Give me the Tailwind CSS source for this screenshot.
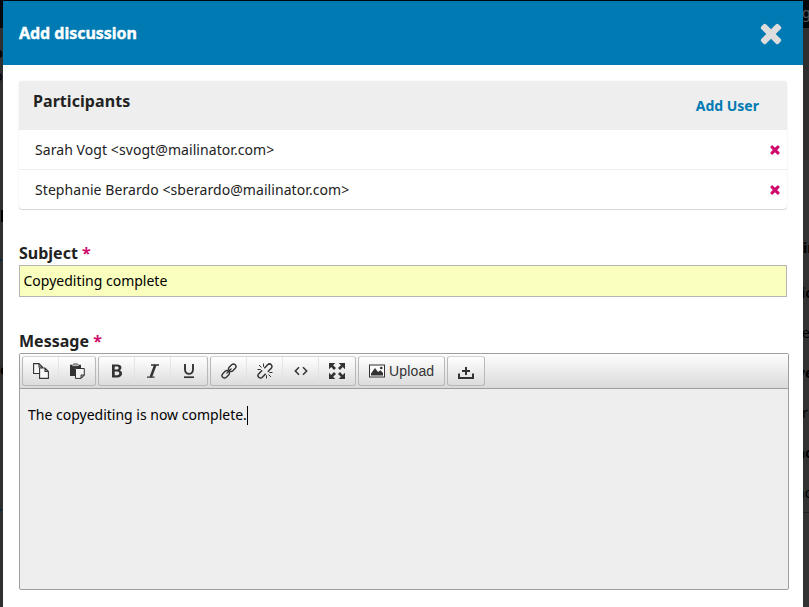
<!DOCTYPE html>
<html lang="en">
<head>
<meta charset="utf-8">
<title>Add discussion</title>
<script src="https://cdn.jsdelivr.net/npm/@tailwindcss/browser@4"></script>
</head>
<body class="relative h-[607px] w-[809px] overflow-hidden bg-[#2f2f2f] font-['Noto_Sans',sans-serif] text-sm text-[#222]">
<!-- dimmed page behind the dialog -->
<div class="absolute inset-0 overflow-hidden text-black" aria-hidden="true">
  <div class="h-7 bg-[#02080c]"></div>
  <div class="absolute right-0 top-[160px] h-[447px] w-1.5 bg-[#323232]"></div>
  <span class="absolute left-[-6px] top-[43px] font-bold">p</span>
  <span class="absolute left-[-6px] top-[66px]">o</span>
  <span class="absolute left-px top-[210px] h-3 w-[2px] bg-black"></span>
  <span class="absolute left-0 top-[259px] h-[2px] w-[2px] bg-[#002b42]"></span>
  <span class="absolute left-0 top-[360px] font-bold">c</span>
  <span class="absolute left-0 top-[509px] h-[2px] w-[2px] bg-[#002b42]"></span>
  <span class="absolute left-[802px] top-[3px] text-sm text-[#555]">g</span>
  <span class="absolute left-[803px] top-[238px] font-bold">in</span>
  <span class="absolute left-[801px] top-[283px] font-bold">ic</span>
  <span class="absolute left-[802px] top-[323px]">e</span>
  <span class="absolute left-[797px] top-[363px] font-bold">ve</span>
  <span class="absolute left-[802px] top-[403px]">r</span>
  <span class="absolute left-[796px] top-[443px] font-bold">nc</span>
  <span class="absolute left-[796px] top-[483px]">no</span>
  <span class="absolute right-0 top-[512px] h-px w-1.5 bg-[#222]"></span>
</div>

<main class="relative ml-[3px] mt-px h-[606px] w-[800px] bg-white">
  <header class="flex h-16 items-center justify-between bg-[#007ab2] pl-4 pr-[21px]">
    <h1 class="text-base font-bold leading-6 tracking-[-0.03px] text-white [-webkit-text-stroke:0.4px_white]">Add discussion</h1>
    <svg class="mt-0.5 h-[22px] w-[22px]" viewBox="0 0 22 22"><path d="M11 6.3 16 1.3Q17.3 .2 18.5 1.3L20.7 3.5Q21.8 4.7 20.7 6L15.7 11 20.7 16Q21.8 17.3 20.7 18.5L18.5 20.7Q17.3 21.8 16 20.7L11 15.7 6 20.7Q4.7 21.8 3.5 20.7L1.3 18.5Q.2 17.3 1.3 16L6.3 11 1.3 6Q.2 4.7 1.3 3.5L3.5 1.3Q4.7 .2 6 1.3Z" fill="#ddd"/></svg>
  </header>

  <div class="pl-4 pt-4">
    <section class="h-32 w-[768px] rounded-[3px] shadow-[0_0_1px_rgba(0,0,0,.2),0_1px_1px_rgba(0,0,0,.15)]">
      <div class="flex h-[49px] justify-between rounded-t-[3px] bg-[#eee] pl-3.5 pr-7">
        <h2 class="pt-2 text-base font-bold leading-6 tracking-[0.06px]">Participants</h2>
        <a class="pt-[15px] text-sm font-bold leading-5 text-[#007ab2]">Add User</a>
      </div>
      <div class="flex h-10 items-center justify-between border-b border-[#eee] pl-4 pr-[7px]">
        <span class="whitespace-nowrap tracking-[0.07px]">Sarah Vogt &lt;svogt@mailinator.com&gt;</span>
        <svg class="mt-px h-2.5 w-2.5" viewBox="0 0 22 22"><path d="M11 6.3 16 1.3Q17.3 .2 18.5 1.3L20.7 3.5Q21.8 4.7 20.7 6L15.7 11 20.7 16Q21.8 17.3 20.7 18.5L18.5 20.7Q17.3 21.8 16 20.7L11 15.7 6 20.7Q4.7 21.8 3.5 20.7L1.3 18.5Q.2 17.3 1.3 16L6.3 11 1.3 6Q.2 4.7 1.3 3.5L3.5 1.3Q4.7 .2 6 1.3Z" fill="#d00a6c"/></svg>
      </div>
      <div class="flex h-[39px] items-center justify-between pl-4 pr-[7px]">
        <span class="whitespace-nowrap tracking-[0.07px]">Stephanie Berardo &lt;sberardo@mailinator.com&gt;</span>
        <svg class="mt-px h-2.5 w-2.5" viewBox="0 0 22 22"><path d="M11 6.3 16 1.3Q17.3 .2 18.5 1.3L20.7 3.5Q21.8 4.7 20.7 6L15.7 11 20.7 16Q21.8 17.3 20.7 18.5L18.5 20.7Q17.3 21.8 16 20.7L11 15.7 6 20.7Q4.7 21.8 3.5 20.7L1.3 18.5Q.2 17.3 1.3 16L6.3 11 1.3 6Q.2 4.7 1.3 3.5L3.5 1.3Q4.7 .2 6 1.3Z" fill="#d00a6c"/></svg>
      </div>
    </section>

    <div class="mt-8 h-6 text-base font-bold leading-6">Subject <span class="text-[#d00a6c]">*</span></div>
    <div class="flex h-8 w-[768px] items-center border border-[#b5b5b5] bg-[#faffbd] pl-[3.5px] text-black">Copyediting complete</div>

    <div class="mt-8 h-6 text-base font-bold leading-6">Message <span class="text-[#d00a6c]">*</span></div>
    <div class="h-[237px] w-[770px] rounded-[2px] border border-[#9e9e9e] bg-[#eee]">
      <div class="flex h-[35px] gap-0.5 border-b border-[#9e9e9e] bg-linear-to-b from-[#fdfdfd] to-[#dadada] pl-0.5 pt-0.5 text-[#333]">
        <div class="flex h-[30px] w-[74px] rounded-[3px] border border-[#b8b8b8] border-t-[#d4d4d4] bg-linear-to-b from-white to-[#dcdcdc]">
          <div class="flex w-9 items-center justify-center border-r border-[#e4e4e4]">
            <svg class="h-4 w-4" viewBox="0 0 16 16" fill="#f8f8f8" stroke="#333" stroke-width="1.1"><path d="M.6.6H6L9.4 4V10.5H.6ZM6 .6V4H9.4"/><path d="M6.6 5H12L15.4 8.4V15.4H6.6ZM12 5V8.4H15.4"/></svg>
          </div>
          <div class="flex w-9 items-center justify-center">
            <svg class="h-4 w-4" viewBox="0 0 16 16"><path d="M1 1.8H4.5V.5H8.5V1.8H12V5H6V13H1Z" fill="#333"/><path d="M3.3 2.6H9.7M5.3 1.3H7.7" stroke="#eee" stroke-width=".8"/><path d="M6.5 5.5H15.3V12L12 15.4H6.5Z" fill="#f3f3f3" stroke="#333"/><path d="M12 15.4V12H15.3Z" fill="#bbb" stroke="#333"/></svg>
          </div>
        </div>
        <div class="flex h-[30px] w-[110px] rounded-[3px] border border-[#b8b8b8] border-t-[#d4d4d4] bg-linear-to-b from-white to-[#dcdcdc]">
          <div class="flex w-9 items-center justify-center border-r border-[#e4e4e4]">
            <svg class="h-4 w-4" viewBox="0 0 16 16"><path fill-rule="evenodd" d="M3 1.5H8.2C13.3 1.5 13.5 6.2 10.6 7.2 14.7 8.4 13.5 14.5 8.5 14.5H3ZM5.7 3.6V6.5H8C10.3 6.5 10.2 3.6 8 3.6ZM5.7 8.6V12.3H8.2C11 12.3 11 8.6 8.2 8.6Z" fill="#333"/></svg>
          </div>
          <div class="flex w-9 items-center justify-center border-r border-[#e4e4e4]">
            <svg class="h-4 w-4" viewBox="0 0 16 16" fill="none" stroke="#333"><path d="M6 2H14M2 14.2H9.5" stroke-width="1.3"/><path d="M10.3 2 5.8 14" stroke-width="2.5"/></svg>
          </div>
          <div class="flex w-9 items-center justify-center">
            <svg class="h-4 w-4" viewBox="0 0 16 16" fill="none" stroke="#333"><path d="M4 1V6.5C4 12.3 12 12.3 12 6.5V1" stroke-width="1.9"/><path d="M3 14.2H13" stroke-width="1.7"/></svg>
          </div>
        </div>
        <div class="flex h-[30px] w-[146px] rounded-[3px] border border-[#b8b8b8] border-t-[#d4d4d4] bg-linear-to-b from-white to-[#dcdcdc]">
          <div class="flex w-9 items-center justify-center border-r border-[#e4e4e4]">
            <svg class="h-4 w-4" viewBox="0 0 16 16" fill="none" stroke="#333" stroke-width="1.4" stroke-linecap="round"><g transform="rotate(-45 8 8)"><rect x="-.8" y="5.5" width="8.3" height="5" rx="2.5"/><rect x="8.5" y="5.5" width="8.3" height="5" rx="2.5"/><path d="M5 8H11"/></g></svg>
          </div>
          <div class="flex w-9 items-center justify-center border-r border-[#e4e4e4]">
            <svg class="h-4 w-4" viewBox="0 0 16 16" fill="none" stroke="#333" stroke-width="1.5"><g transform="rotate(-45 8 8)"><path d="M6.5 5.5H1.7A2.5 2.5 0 0 0 1.7 10.5H6.5M9.5 5.5H14.3A2.5 2.5 0 0 1 14.3 10.5H9.5"/></g><path d="M6.5 3.8V.5M4.5 4.5 2 2M3.7 6.5H.5M9.5 12.2V15.5M11.5 11.5 14 14M12.3 9.5H15.5" stroke-width="1"/></svg>
          </div>
          <div class="flex w-9 items-center justify-center border-r border-[#e4e4e4]">
            <svg class="h-4 w-4" viewBox="0 0 16 16" fill="none" stroke="#333" stroke-width="1.5"><path d="M6 4.2 2.3 8 6 11.8M10 4.2 13.7 8 10 11.8"/></svg>
          </div>
          <div class="flex w-9 items-center justify-center">
            <svg class="h-4 w-4" viewBox="0 0 16 16"><path d="M0 0H6.3L4.1 2.2 7 5 5 7 2.2 4.1 0 6.3ZM16 0V6.3L13.8 4.1 11 7 9 5 11.9 2.2 9.7 0ZM0 16V9.7L2.2 11.9 5 9 7 11 4.1 13.8 6.3 16ZM16 16H9.7L11.9 13.8 9 11 11 9 13.8 11.9 16 9.7Z" fill="#333"/></svg>
          </div>
        </div>
        <div class="flex h-[30px] w-[87px] items-center rounded-[3px] border border-[#b8b8b8] border-t-[#d4d4d4] bg-linear-to-b from-white to-[#dcdcdc] pl-2.5">
          <svg class="h-4 w-4 shrink-0" viewBox="0 0 16 16"><rect x=".5" y="2" width="15" height="12" fill="#fafafa" stroke="#333"/><path d="M2 12.5V10.5L6 5 9 9 11.5 7.3 14 10V12.5Z" fill="#333"/><circle cx="12.3" cy="5" r="1.3" fill="#333"/></svg>
          <span class="ml-1 font-['Liberation_Sans',Arial,sans-serif] text-sm leading-5 tracking-[0.15px]">Upload</span>
        </div>
        <div class="flex h-[30px] w-[38px] items-center justify-center rounded-[3px] border border-[#b8b8b8] border-t-[#d4d4d4] bg-linear-to-b from-white to-[#dcdcdc]">
          <svg class="mt-[3px] h-4 w-4" viewBox="0 0 16 16" fill="none" stroke="#333" stroke-width="2"><path d="M1 8.5V13H15V8.5M8 2V10M4 6H12"/></svg>
        </div>
      </div>
      <div class="flex items-center pl-2 pt-4 text-black"><span class="whitespace-nowrap">The copyediting is now complete.</span><span class="h-[19px] w-px bg-black"></span></div>
    </div>
  </div>
</main>
</body>
</html>
